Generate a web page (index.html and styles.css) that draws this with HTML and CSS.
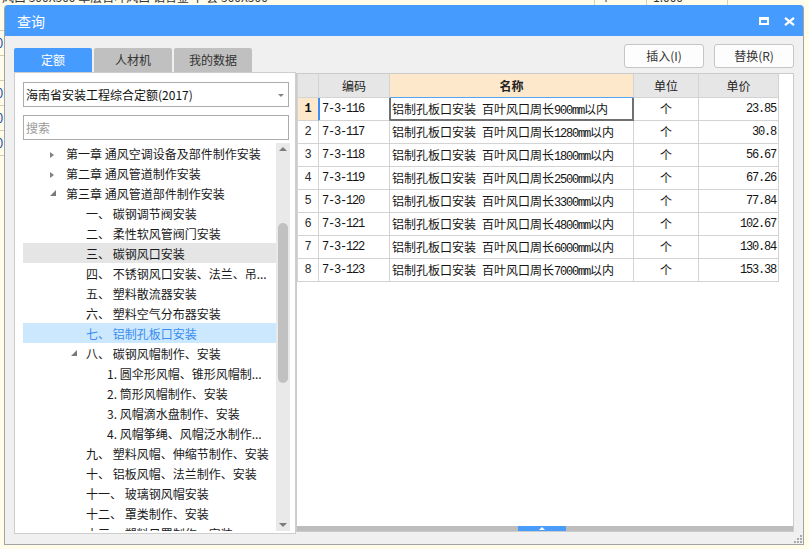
FILE: index.html
```html
<!DOCTYPE html>
<html lang="zh-CN">
<head>
<meta charset="utf-8">
<title>查询</title>
<link rel="stylesheet" href="styles.css">
</head>
<body>
<div class="desk">
  <div class="desk-top">
    <div class="dt-cell dt-a"><span class="dt-text">风口 300X300 单层百叶风口 铝合金 十 套 300X300</span></div>
    <div class="dt-cell dt-b"><span class="dt-text">个</span></div>
    <div class="dt-cell dt-c"><span class="dt-text">1.000</span></div>
    <div class="dt-cell dt-d"></div>
  </div>
  <div class="desk-left">
    <div class="dl-row">(</div>
    <div class="dl-row">0</div>
    <div class="dl-row">)</div>
    <div class="dl-row">0</div>
    <div class="dl-row">0</div>
    <div class="dl-row">0</div>
  </div>
</div>

<div class="dialog">
  <div class="titlebar">
    <span class="title">查询</span>
    <span class="tb-icons">
      <svg class="ic-max" width="10" height="8" viewBox="0 0 10 8"><path fill="#fff" fill-rule="evenodd" d="M0 0H10V8H0Z M2 3V6H8V3Z"/></svg>
      <svg class="ic-close" width="11" height="9" viewBox="0 0 11 9"><path d="M1 0.8L10 8.2M10 0.8L1 8.2" stroke="#fff" stroke-width="2.2" fill="none"/></svg>
    </span>
  </div>

  <div class="body">
    <div class="left">
      <div class="tabs">
        <div class="tab active">定额</div>
        <div class="tab">人材机</div>
        <div class="tab">我的数据</div>
      </div>
      <div class="lpanel">
        <div class="select"><span>海南省安装工程综合定额(2017)</span><i class="caret"></i></div>
        <input class="search" type="text" placeholder="搜索">
        <div class="tree">
          <div class="rows">
            <div class="node l1"><i class="tw closed"></i><span class="tx">第一章 通风空调设备及部件制作安装</span></div>
            <div class="node l1"><i class="tw closed"></i><span class="tx">第二章 通风管道制作安装</span></div>
            <div class="node l1"><i class="tw open"></i><span class="tx">第三章 通风管道部件制作安装</span></div>
            <div class="node l2"><i class="tw"></i><span class="tx">一、 碳钢调节阀安装</span></div>
            <div class="node l2"><i class="tw"></i><span class="tx">二、 柔性软风管阀门安装</span></div>
            <div class="node l2 hover"><i class="tw"></i><span class="tx">三、 碳钢风口安装</span></div>
            <div class="node l2"><i class="tw"></i><span class="tx">四、 不锈钢风口安装、法兰、吊...</span></div>
            <div class="node l2"><i class="tw"></i><span class="tx">五、 塑料散流器安装</span></div>
            <div class="node l2"><i class="tw"></i><span class="tx">六、 塑料空气分布器安装</span></div>
            <div class="node l2 sel"><i class="tw"></i><span class="tx">七、 铝制孔板口安装</span></div>
            <div class="node l2"><i class="tw open"></i><span class="tx">八、 碳钢风帽制作、安装</span></div>
            <div class="node l3"><i class="tw"></i><span class="tx">1. 圆伞形风帽、锥形风帽制...</span></div>
            <div class="node l3"><i class="tw"></i><span class="tx">2. 筒形风帽制作、安装</span></div>
            <div class="node l3"><i class="tw"></i><span class="tx">3. 风帽滴水盘制作、安装</span></div>
            <div class="node l3"><i class="tw"></i><span class="tx">4. 风帽筝绳、风帽泛水制作...</span></div>
            <div class="node l2"><i class="tw"></i><span class="tx">九、 塑料风帽、伸缩节制作、安装</span></div>
            <div class="node l2"><i class="tw"></i><span class="tx">十、 铝板风帽、法兰制作、安装</span></div>
            <div class="node l2"><i class="tw"></i><span class="tx">十一、 玻璃钢风帽安装</span></div>
            <div class="node l2"><i class="tw"></i><span class="tx">十二、 罩类制作、安装</span></div>
            <div class="node l2"><i class="tw"></i><span class="tx">十三、 塑料风罩制作、安装</span></div>
          </div>
          <div class="vscroll">
            <i class="arr-up"></i>
            <div class="vthumb"></div>
            <i class="arr-down"></i>
          </div>
        </div>
      </div>
    </div>

    <div class="right">
      <div class="btns">
        <button class="btn">插入(I)</button>
        <button class="btn">替换(R)</button>
      </div>
      <div class="gpanel">
        <div class="grid">
          <div class="c rn hd"></div>
          <div class="c hd">编码</div>
          <div class="c hd hd-name">名称</div>
          <div class="c hd">单位</div>
          <div class="c hd">单价</div>

          <div class="c rn cur">1</div>
          <div class="c code cur-code">7-3-116</div>
          <div class="c nm focus">铝制孔板口安装<span class="n"> </span>百叶风口周长<span class="n">900mm</span>以内</div>
          <div class="c un">个</div>
          <div class="c pr">23.85</div>

          <div class="c rn">2</div>
          <div class="c code">7-3-117</div>
          <div class="c nm">铝制孔板口安装<span class="n"> </span>百叶风口周长<span class="n">1280mm</span>以内</div>
          <div class="c un">个</div>
          <div class="c pr">30.8</div>

          <div class="c rn">3</div>
          <div class="c code">7-3-118</div>
          <div class="c nm">铝制孔板口安装<span class="n"> </span>百叶风口周长<span class="n">1800mm</span>以内</div>
          <div class="c un">个</div>
          <div class="c pr">56.67</div>

          <div class="c rn">4</div>
          <div class="c code">7-3-119</div>
          <div class="c nm">铝制孔板口安装<span class="n"> </span>百叶风口周长<span class="n">2500mm</span>以内</div>
          <div class="c un">个</div>
          <div class="c pr">67.26</div>

          <div class="c rn">5</div>
          <div class="c code">7-3-120</div>
          <div class="c nm">铝制孔板口安装<span class="n"> </span>百叶风口周长<span class="n">3300mm</span>以内</div>
          <div class="c un">个</div>
          <div class="c pr">77.84</div>

          <div class="c rn">6</div>
          <div class="c code">7-3-121</div>
          <div class="c nm">铝制孔板口安装<span class="n"> </span>百叶风口周长<span class="n">4800mm</span>以内</div>
          <div class="c un">个</div>
          <div class="c pr">102.67</div>

          <div class="c rn">7</div>
          <div class="c code">7-3-122</div>
          <div class="c nm">铝制孔板口安装<span class="n"> </span>百叶风口周长<span class="n">6000mm</span>以内</div>
          <div class="c un">个</div>
          <div class="c pr">130.84</div>

          <div class="c rn">8</div>
          <div class="c code">7-3-123</div>
          <div class="c nm">铝制孔板口安装<span class="n"> </span>百叶风口周长<span class="n">7000mm</span>以内</div>
          <div class="c un">个</div>
          <div class="c pr">153.38</div>
        </div>
        <div class="hscroll"><div class="hthumb"><i class="hthumb-arr"></i></div></div>
      </div>
    </div>
  </div>

  <svg class="grip" width="9" height="9" viewBox="0 0 9 9">
    <rect x="6" y="0" width="2" height="2" fill="#a9a9a9"/>
    <rect x="3" y="3" width="2" height="2" fill="#a9a9a9"/>
    <rect x="6" y="3" width="2" height="2" fill="#a9a9a9"/>
    <rect x="0" y="6" width="2" height="2" fill="#a9a9a9"/>
    <rect x="3" y="6" width="2" height="2" fill="#a9a9a9"/>
    <rect x="6" y="6" width="2" height="2" fill="#a9a9a9"/>
  </svg>
</div>
</body>
</html>
```

FILE: styles.css
```css
* { box-sizing: border-box; }
html, body { margin: 0; padding: 0; }
body {
  width: 809px;
  height: 549px;
  overflow: hidden;
  position: relative;
  background: #fffce9;
  font-family: "Noto Sans CJK SC", "Microsoft YaHei", sans-serif;
  font-size: 12px;
  color: #1c1c1c;
}

/* background application behind the dialog */
.desk { height: 549px; position: relative; }
.desk-top {
  height: 6px;
  overflow: hidden;
  display: flex;
}
.dt-cell {
  height: 6px;
  overflow: hidden;
  white-space: nowrap;
  border-right: 1px solid #d9d4b5;
  color: #333;
  font-size: 12px;
}
.dt-text {
  display: block;
  line-height: 14px;
  margin-top: -10px;
}
.dt-a { width: 595px; padding-left: 2px; }
.dt-b { width: 52px; padding-left: 5px; }
.dt-c { width: 81px; padding-left: 6px; }
.dt-d { flex: 1; border-right: 0; }

.desk-left {
  position: absolute;
  left: 0;
  top: 6px;
  width: 4px;
  display: flex;
  flex-direction: column;
  overflow: hidden;
}
.dl-row {
  height: 25px;
  border-bottom: 1px solid #d2cca8;
  color: #2a55b8;
  text-indent: -4px;
  line-height: 24px;
  font-size: 13px;
}

/* dialog window */
.dialog {
  position: absolute;
  left: 4px;
  top: 5px;
  width: 800px;
  height: 540px;
  background: #f0f0f0;
  border: 1px solid #a3a3a3;
  border-top: 0;
  border-radius: 4px 4px 0 0;
  display: flex;
  flex-direction: column;
}
.titlebar {
  flex: none;
  height: 31px;
  background: #469bfe;
  border-radius: 3px 3px 0 0;
  padding: 0 8px 0 12px;
  display: flex;
  align-items: center;
  justify-content: space-between;
  color: #fff;
}
.title { font-size: 14px; line-height: 31px; padding-top: 2px; }
.tb-icons { display: flex; align-items: center; padding-top: 1px; }
.ic-max { display: block; margin-right: 15px; }
.ic-close { display: block; }

.body {
  flex: 1;
  display: flex;
  padding: 0 9px;
}
.left { width: 282px; padding-top: 12px; display: flex; flex-direction: column; }
.right { width: 498px; padding-top: 8px; display: flex; flex-direction: column; }

/* tabs */
.tabs { display: flex; gap: 2px; height: 24px; }
.tab {
  width: 78px;
  height: 24px;
  line-height: 24px;
  text-align: center;
  background: #c0c0c0;
  color: #333;
  border-radius: 2px 2px 0 0;
  font-size: 12px;
}
.tab.active { background: #469bfe; color: #fff; }

/* left panel */
.lpanel {
  height: 462px;
  background: #fff;
  border: 1px solid #cecece;
  padding: 9px 5px 0 8px;
  display: flex;
  flex-direction: column;
}
.select {
  height: 25px;
  margin-right: 1px;
  border: 1px solid #ababab;
  display: flex;
  align-items: center;
  justify-content: space-between;
  padding: 0 4px 0 2px;
  color: #111;
  font-size: 12px;
}
.caret {
  width: 0; height: 0;
  border-left: 3px solid transparent;
  border-right: 3px solid transparent;
  border-top: 3px solid #858585;
  margin-top: 1px;
}
.search {
  margin: 8px 1px 0 0;
  height: 25px;
  border: 1px solid #ababab;
  padding: 0 2px;
  font-family: "Noto Sans CJK SC", sans-serif;
  font-size: 12px;
  outline: none;
  background: #fff;
}
.search::placeholder { color: #9a9a9a; }

.tree { margin-top: 3px; height: 388px; display: flex; }
.rows { flex: 1; overflow: hidden; }
.node {
  height: 20px;
  display: flex;
  align-items: center;
  white-space: nowrap;
  color: #1a1a1a;
}
.node.l1 { padding-left: 27px; }
.node.l2 { padding-left: 47px; }
.node.l3 { padding-left: 68px; }
.tw {
  width: 16px;
  height: 20px;
  flex: none;
  position: relative;
}
.tw.closed::before {
  content: "";
  position: absolute;
  left: 0;
  top: 9px;
  border-left: 4px solid #828282;
  border-top: 3.5px solid transparent;
  border-bottom: 3.5px solid transparent;
}
.tw.open::before {
  content: "";
  position: absolute;
  left: 0;
  top: 7px;
  border-right: 6px solid #7a7a7a;
  border-top: 6px solid transparent;
}
.node.l2 .tw.open::before { left: 1px; }
.tx { line-height: 20px; padding-top: 1px; }
.node.hover { background: #e5e5e5; }
.node.sel { background: #cce8ff; color: #3a8dee; }

.vscroll {
  width: 14px;
  background: #e9e9e9;
  display: flex;
  flex-direction: column;
  align-items: center;
}
.arr-up {
  margin-top: 4px;
  width: 0; height: 0;
  border-left: 4px solid transparent;
  border-right: 4px solid transparent;
  border-bottom: 4px solid #7c7c7c;
}
.vthumb {
  margin-top: 72px;
  width: 10px;
  height: 160px;
  border-radius: 5px;
  background: #c1c1c1;
}
.arr-down {
  margin-top: auto;
  margin-bottom: 4px;
  width: 0; height: 0;
  border-left: 4px solid transparent;
  border-right: 4px solid transparent;
  border-top: 4px solid #7c7c7c;
}

/* right side */
.btns { display: flex; justify-content: flex-end; gap: 10px; height: 24px; }
.btn {
  width: 80px;
  height: 24px;
  padding: 0;
  border: 1px solid #c6c6c6;
  border-radius: 3px;
  background: #fdfdfd;
  color: #333;
  font-family: "Noto Sans CJK SC", sans-serif;
  font-size: 12px;
  line-height: 22px;
}
.gpanel {
  margin-top: 5px;
  height: 459px;
  background: #fff;
  border: 1px solid #cbcbcb;
  display: flex;
  flex-direction: column;
}
.grid {
  flex: 1;
  display: grid;
  grid-template-columns: 22px 71px 244px 65px 80px;
  grid-template-rows: 24px;
  grid-auto-rows: 23px;
  align-content: start;
}
.c {
  border-right: 1px solid #d3d3d3;
  border-bottom: 1px solid #d3d3d3;
  line-height: 22px;
  white-space: nowrap;
  overflow: hidden;
  color: #141414;
  font-size: 12px;
}
.c.rn {
  border-left: 1px solid #d3d3d3;
  text-align: center;
  font-family: "Liberation Mono", monospace;
  font-size: 12px;
  color: #2a2a2a;
}
.c.hd {
  background: #e6e6e6;
  text-align: center;
  line-height: 23px;
  color: #222;
}
.c.hd-name { background: #fee8cb; font-weight: 700; border-bottom-color: #5aa3f4; }
.c.rn.cur { background: #fee8cb; font-weight: 700; color: #111; border-right-color: #3d8ff5; }
.c.code {
  padding-left: 3px;
  font-family: "Liberation Mono", monospace;
  letter-spacing: -1.2px;
}
.c.cur-code { box-shadow: inset 1px 0 #3d8ff5; border-right-color: #707070; }
.c.nm { padding-left: 2px; }
.c.focus {
  box-shadow: inset 1px 0 #707070, inset -1px 0 #707070, inset 0 -1px #707070;
  border-right-color: #707070;
  border-bottom-color: #707070;
}
.n {
  font-family: "Liberation Mono", monospace;
  font-size: 12px;
  letter-spacing: -1.2px;
}
.c.un { text-align: center; }
.c.pr {
  text-align: right;
  padding-right: 2px;
  font-family: "Liberation Mono", monospace;
  letter-spacing: -1.2px;
}

.hscroll {
  flex: none;
  height: 5px;
  background: #bdbdbd;
  display: flex;
}
.hthumb {
  margin-left: 221px;
  width: 48px;
  height: 5px;
  background: #4a9cfb;
  display: flex;
  justify-content: center;
  align-items: center;
}
.hthumb-arr {
  width: 0; height: 0;
  border-left: 3px solid transparent;
  border-right: 3px solid transparent;
  border-bottom: 3px solid #fff;
}

.grip { position: absolute; right: 0; bottom: 0; display: block; }
```
